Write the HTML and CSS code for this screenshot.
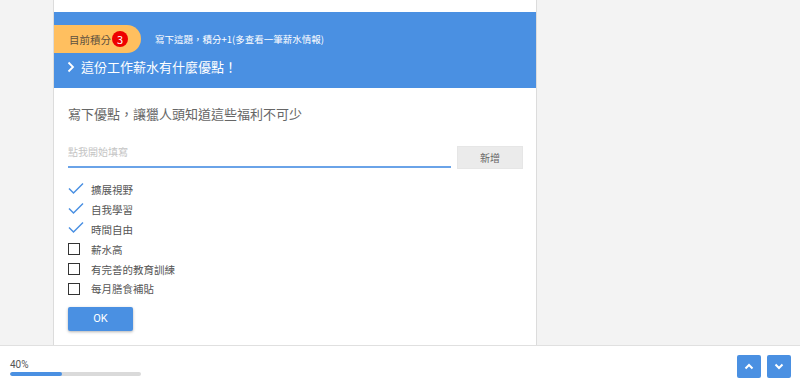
FILE: index.html
```
<!doctype html>
<html>
    <head>
        <title>薪水有什麼優點</title>
        <meta content="text/html;charset=utf-8" http-equiv="Content-Type">
        <meta name="viewport" content="width=device-width, initial-scale=1">
        <link rel="stylesheet" href="styles.css">
    </head>

    <body>
        <main class="page">
            <section class="card">
                <div class="banner">
                    <div class="banner-top">
                        <span class="pill">目前積分<span class="badge">3</span></span>
                        <span class="note">寫下這題，積分+1(多查看一筆薪水情報)</span>
                    </div>
                    <h1 class="title">
                        <svg class="chevron" width="8" height="12" viewBox="0 0 8 12"><path d="M1.5 1.5 L6 6 L1.5 10.5" fill="none" stroke="#fff" stroke-width="1.8"/></svg>
                        這份工作薪水有什麼優點！
                    </h1>
                </div>

                <div class="body">
                    <h2 class="question">寫下優點，讓獵人頭知道這些福利不可少</h2>

                    <div class="add-row">
                        <input class="add-input" type="text" placeholder="點我開始填寫">
                        <button class="add-btn">新增</button>
                    </div>

                    <ul class="options">
                        <li class="checked"><span class="mark"><svg width="16" height="13" viewBox="0 0 16 13"><path d="M1 6.5 L5.5 11 L15 1.5" fill="none" stroke="#4a90e2" stroke-width="1.5"/></svg></span>擴展視野</li>
                        <li class="checked"><span class="mark"><svg width="16" height="13" viewBox="0 0 16 13"><path d="M1 6.5 L5.5 11 L15 1.5" fill="none" stroke="#4a90e2" stroke-width="1.5"/></svg></span>自我學習</li>
                        <li class="checked"><span class="mark"><svg width="16" height="13" viewBox="0 0 16 13"><path d="M1 6.5 L5.5 11 L15 1.5" fill="none" stroke="#4a90e2" stroke-width="1.5"/></svg></span>時間自由</li>
                        <li><span class="mark"><span class="box"></span></span>薪水高</li>
                        <li><span class="mark"><span class="box"></span></span>有完善的教育訓練</li>
                        <li><span class="mark"><span class="box"></span></span>每月膳食補貼</li>
                    </ul>

                    <button class="ok-btn">OK</button>
                </div>
            </section>
        </main>

        <footer class="footer">
            <div class="progress">
                <p class="progress-label">40%</p>
                <div class="progress-bar"><div class="progress-fill" style="width: 40%"></div></div>
            </div>
            <div class="nav">
                <button class="nav-btn"><svg width="10" height="7" viewBox="0 0 10 7"><path d="M1.5 5.5 L5 2 L8.5 5.5" fill="none" stroke="#fff" stroke-width="2"/></svg></button>
                <button class="nav-btn"><svg width="10" height="7" viewBox="0 0 10 7"><path d="M1.5 1.5 L5 5 L8.5 1.5" fill="none" stroke="#fff" stroke-width="2"/></svg></button>
            </div>
        </footer>
    </body>
</html>
```

FILE: styles.css
```
html, body {
    margin: 0;
    height: 100%;
}

body {
    display: flex;
    flex-direction: column;
    background: #f3f3f3;
    color: #555;
    font-family: "Noto Sans CJK TC", "Noto Sans", sans-serif;
    overflow: hidden;
}

.page {
    flex: 1;
    overflow: hidden;
    padding-left: 53px;
}

.card {
    width: 484px;
    min-height: 400px;
    padding-top: 12px;
    background: #fff;
    border-left: 1px solid #dcdcdc;
    border-right: 1px solid #dcdcdc;
    box-sizing: border-box;
}

.banner {
    background: #4a90e2;
    padding-top: 13px;
    height: 76px;
    box-sizing: border-box;
}

.banner-top {
    display: flex;
    align-items: center;
}

.pill {
    display: inline-flex;
    align-items: center;
    gap: 1px;
    height: 28px;
    padding: 0 13px 0 15px;
    background: #ffbf5f;
    border-radius: 0 14px 14px 0;
    color: #5e5140;
    font-size: 10.5px;
}

.badge {
    display: inline-flex;
    align-items: center;
    justify-content: center;
    width: 16px;
    height: 16px;
    border-radius: 50%;
    background: #ee0000;
    color: #fff;
    font-size: 11px;
    line-height: 1;
}

.note {
    margin-left: 14px;
    color: #fff;
    font-size: 9.5px;
}

.title {
    display: flex;
    align-items: center;
    gap: 6px;
    margin: 0;
    padding: 4px 0 0 13px;
    color: #fff;
    font-size: 13px;
    font-weight: normal;
    line-height: 20px;
}

.body {
    padding: 0 13px 14px 14px;
}

.question {
    margin: 16px 0 0;
    color: #666;
    font-size: 13px;
    font-weight: normal;
    line-height: 20px;
}

.add-row {
    display: flex;
    align-items: flex-end;
    gap: 6px;
    margin-top: 19px;
}

.add-input {
    flex: 1;
    padding: 2px 0 7px;
    border: none;
    border-bottom: 2px solid #6aa3e8;
    font-family: inherit;
    font-size: 10px;
    line-height: 14px;
    color: #555;
    outline: none;
}

.add-input::placeholder {
    color: #c4c4c4;
}

.add-btn {
    width: 66px;
    height: 23px;
    margin-bottom: -1px;
    border: 1px solid #e6e6e6;
    background: #ebebeb;
    color: #666;
    font-family: inherit;
    font-size: 10px;
}

.options {
    list-style: none;
    margin: 12px 0 0;
    padding: 0;
}

.options li {
    display: flex;
    align-items: center;
    height: 19.8px;
    font-size: 10.5px;
    color: #555;
}

.mark {
    display: flex;
    align-items: center;
    width: 23px;
}

.options li.checked .mark {
    margin-top: -3px;
}

.box {
    width: 10px;
    height: 10px;
    border: 1.5px solid #333;
}

.ok-btn {
    margin-top: 8px;
    width: 65px;
    height: 24px;
    border: none;
    border-radius: 2px;
    background: #4a90e2;
    color: #fff;
    font-family: Roboto, sans-serif;
    font-size: 11px;
    box-shadow: 0 1px 3px rgba(0, 0, 0, 0.3);
}

.footer {
    display: flex;
    align-items: center;
    justify-content: space-between;
    height: 42px;
    padding: 0 9px 0 10px;
    background: #fff;
    border-top: 1px solid #e0e0e0;
    box-sizing: border-box;
}

.progress-label {
    margin: 0 0 1px;
    font-family: Roboto, sans-serif;
    font-size: 10px;
    line-height: 13px;
    color: #555;
}

.progress-bar {
    width: 131px;
    height: 4px;
    border-radius: 2px;
    background: #dadada;
    overflow: hidden;
}

.progress-fill {
    height: 100%;
    border-radius: 2px;
    background: #4a90e2;
}

.nav {
    display: flex;
    gap: 6px;
}

.nav-btn {
    display: flex;
    align-items: center;
    justify-content: center;
    width: 24px;
    height: 23px;
    padding: 0;
    border: none;
    border-radius: 2px;
    background: #4a90e2;
}
```
